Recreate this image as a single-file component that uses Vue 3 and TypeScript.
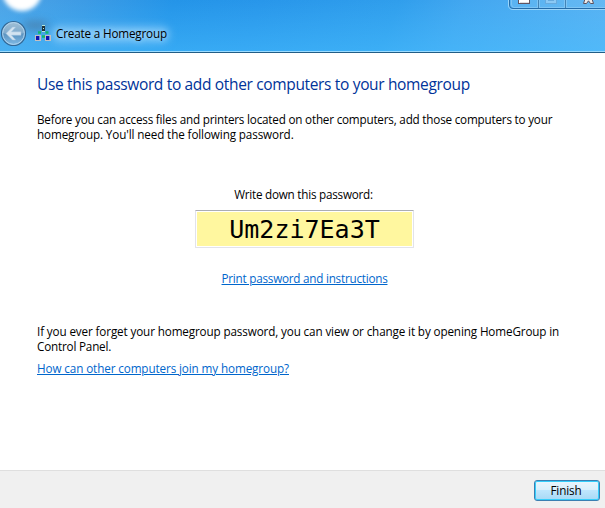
<script setup lang="ts">
const password = 'Um2zi7Ea3T'
</script>

<template>
  <div class="window">
    <header class="titlebar">
      <div class="glow"></div>
      <div class="smudge"></div>
      <div class="halo"></div>
      <svg class="controls" width="101" height="12" viewBox="0 0 101 12">
        <path d="M0.5 0V5Q0.5 9.5 5 9.5H101" fill="none" stroke="#9ad5fa" stroke-width="1" />
        <path d="M1.5 0V5Q1.5 8.5 5 8.5H101V0Z" fill="#8bcaf5" fill-opacity=".25" />
        <path d="M1.5 0V5Q1.5 8.5 5 8.5H101" fill="none" stroke="#246ca9" />
        <path d="M3.5 0V4Q3.5 7.5 6 7.5H101M29.500 0V7M31.500 0V7M56.500 0V7M58.500 0V7" fill="none" stroke="#86c8f5" stroke-opacity=".8" />
        <path d="M30.500 0V8M57.500 0V8" stroke="#4283b5" />
        <rect x="10.500" y="-3.500" width="11" height="7" fill="#fff" stroke="#615461" />
        <path d="M12 2.500H21" stroke="#dddde0" />
        <rect x="37.500" y="-4.500" width="11" height="8" fill="#8bc9f5" stroke="#67aadd" />
        <rect x="40.500" y="-3.500" width="5" height="4" fill="#58aeee" stroke="#67aadd" />
        <path d="M77 -1L75.500 3.500H78.500L80.500 0.800L82.500 3.500H85.500L84 -1Z" fill="#eee" stroke="#5c5260" />
      </svg>
      <svg class="back" width="28" height="28" viewBox="0 0 28 28">
        <defs>
          <linearGradient id="orb" x1="0" y1="0" x2="0" y2="1">
            <stop offset="0" stop-color="#a3c0d4" />
            <stop offset=".48" stop-color="#7fabcd" />
            <stop offset=".52" stop-color="#5b93c0" />
            <stop offset="1" stop-color="#82bce8" />
          </linearGradient>
        </defs>
        <circle cx="13.500" cy="14.500" r="12" fill="url(#orb)" stroke="#326896" stroke-width="1.200" />
        <circle cx="13.500" cy="14.500" r="10.900" fill="none" stroke="#b2d5ef" stroke-width="1" />
        <path d="M6 14.500L12.500 8H15.700L11.500 12.800H21V16.200H11.500L15.700 21H12.500Z" fill="#d3e3f0" stroke="#a1c4e0" stroke-width=".5" />
      </svg>
      <svg class="network" width="17" height="17" viewBox="0 0 17 17">
        <path d="M3 7.500H6M10.500 7.500H13.500M7 11.500H10" fill="none" stroke="#10b870" stroke-width="2.400" />
        <rect x="7" y="0" width="3" height="6" fill="#21323a" />
        <path d="M7 .5H10M8 3.500H9M7 6.500H10" stroke="#b5e8dc" />
        <rect x="0.500" y="10.500" width="5" height="5" fill="#6f8cd8" stroke="#c4bfc0" />
        <rect x="10.500" y="10.500" width="5" height="5" fill="#6f8cd8" stroke="#c4bfc0" />
        <path d="M1 11H4V15H1ZM11 11H14V15H11Z" fill="#1015b0" />
      </svg>
      <span class="caption">Create a Homegroup</span>
    </header>
    <main class="content">
      <h1>Use this password to add other computers to your homegroup</h1>
      <p class="intro"><span class="l1">Before you can access files and printers located on other computers, add those computers to your</span><span class="l2">homegroup. You'll need the following password.</span></p>
      <section class="secret">
        <span class="label">Write down this password:</span>
        <div class="password">{{ password }}</div>
        <a class="print">Print password and instructions</a>
      </section>
      <p class="note"><span class="l3">If you ever forget your homegroup password, you can view or change it by opening HomeGroup in</span><span class="l4">Control Panel.</span></p>
      <a class="help">How can other computers join my homegroup?</a>
    </main>
    <footer class="footer"><button>Finish</button></footer>
  </div>
</template>

<style>
body { margin: 0; overflow: hidden; }
</style>

<style scoped>
.window { width: 605px; height: 508px; display: flex; flex-direction: column; background: #fff; color: #000; font: 11.7px/15px "Open Sans", "Noto Sans", sans-serif; overflow: hidden; }
.titlebar { position: relative; box-sizing: border-box; height: 53px; flex: none; display: flex; align-items: flex-start; overflow: hidden; border-bottom: 1px solid #215d86;
  background: linear-gradient(110deg, #4fa4e6 0%, #3c9be5 14%, #2494e8 28%, #2896ea 42%, #309eec 64%, #43a7f0 75%, #5ab3f3 100%); }
.titlebar::before { content: ""; position: absolute; inset: 0; border-bottom: 1px solid #9bdcff; background: linear-gradient(#1f8ee600, #48bfff80); }
.glow { position: absolute; left: 2px; top: -29px; width: 40px; height: 40px; border-radius: 50%; background: #fff; filter: blur(2px); }
.smudge { position: absolute; left: 22px; top: 21px; width: 27px; height: 9px; border-radius: 50%; background: #496b8c90; filter: blur(4px); }
.halo { position: absolute; left: 52px; top: 27px; width: 117px; height: 15px; border-radius: 8px; background: #a9daff99; filter: blur(5px); }
.controls { position: absolute; right: -4px; top: 0; }
.back { position: relative; margin: 19px 0 0 0; }
.network { position: relative; margin: 25px 0 0 7px; }
.caption { position: relative; margin: 26px 0 0 4px; white-space: nowrap; letter-spacing: -.17px; text-shadow: 0 0 6px #b9e1ff; }
.content { flex: 1; display: flex; flex-direction: column; align-items: flex-start; padding: 20px 37px 0; white-space: nowrap; }
h1 { margin: 0; font-size: 15.5px; line-height: 22px; font-weight: 400; color: #039; letter-spacing: -.34px; }
p { margin: 0; }
p span { display: block; }
.intro { margin-top: 17px; }
.l1 { letter-spacing: -.2px; }
.l2 { letter-spacing: -.12px; }
.l3 { letter-spacing: -.13px; }
.l4 { letter-spacing: -.19px; }
.secret { align-self: flex-start; margin: 45px 0 0 158px; width: 219px; display: flex; flex-direction: column; align-items: center; }
.label { letter-spacing: -.23px; padding-right: 2px; }
.password { box-sizing: border-box; width: 219px; height: 38px; margin-top: 8px; border: 1px solid #e2e3ea; border-top-color: #abadb3; border-radius: 1px; box-shadow: inset 0 0 0 1px #fff; background: #fff79f; text-align: center; font: 25px/37px "DejaVu Sans Mono", monospace; }
a { color: #06c; text-decoration: underline; cursor: pointer; }
.print { margin-top: 23px; letter-spacing: -.23px; }
.note { margin-top: 38px; }
.help { margin-top: 7px; letter-spacing: -.11px; }
.footer { box-sizing: border-box; flex: none; height: 38px; border-top: 1px solid #dfdfdf; background: #f0f0f0; display: flex; justify-content: flex-end; padding: 9px 5px 0 0; }
button { box-sizing: border-box; width: 66px; height: 21px; padding: 0 2px 1px 0; border: 1px solid #3c7fb1; border-radius: 3px; box-shadow: inset 0 0 0 1px #35cefb; background: linear-gradient(#eaf6fd 0, #d9f0fc 48%, #bee6fd 50%, #a7d9f5 100%); color: #000; font: inherit; line-height: 17px; letter-spacing: -.1px; }
</style>
